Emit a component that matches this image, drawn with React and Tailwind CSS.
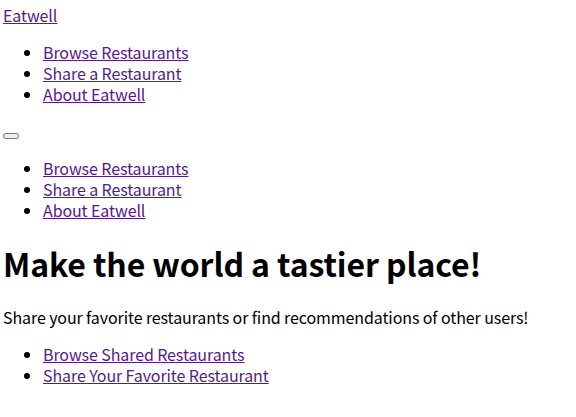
export default function App() {
  const link = 'text-[#551a8b] underline'
  const nav = ['Browse Restaurants', 'Share a Restaurant', 'About Eatwell']

  return (
    <div className="px-[3px] pt-[5px] bg-white text-black text-[16px] leading-[21px] tracking-[-0.1px] font-['Noto_Sans_CJK_KR','Noto_Sans',sans-serif]">
      <a href="#" className={link}>Eatwell</a>

      <ul className="list-disc pl-10 my-4">
        {nav.map(t => (
          <li key={t}><a href="#" className={link}>{t}</a></li>
        ))}
      </ul>

      <div>
        <button className="inline-block align-baseline w-[16px] h-[6px] rounded-[3px] border border-[#767676] bg-[#efefef]" />
      </div>

      <ul className="list-disc pl-10 my-4">
        {nav.map(t => (
          <li key={t}><a href="#" className={link}>{t}</a></li>
        ))}
      </ul>

      <h1 className="text-[32px] leading-[43px] font-bold mt-[21px] mb-[22px]">Make the world a tastier place!</h1>

      <p className="my-4">Share your favorite restaurants or find recommendations of other users!</p>

      <ul className="list-disc pl-10 my-4">
        <li><a href="#" className={link}>Browse Shared Restaurants</a></li>
        <li><a href="#" className={link}>Share Your Favorite Restaurant</a></li>
      </ul>
    </div>
  )
}
